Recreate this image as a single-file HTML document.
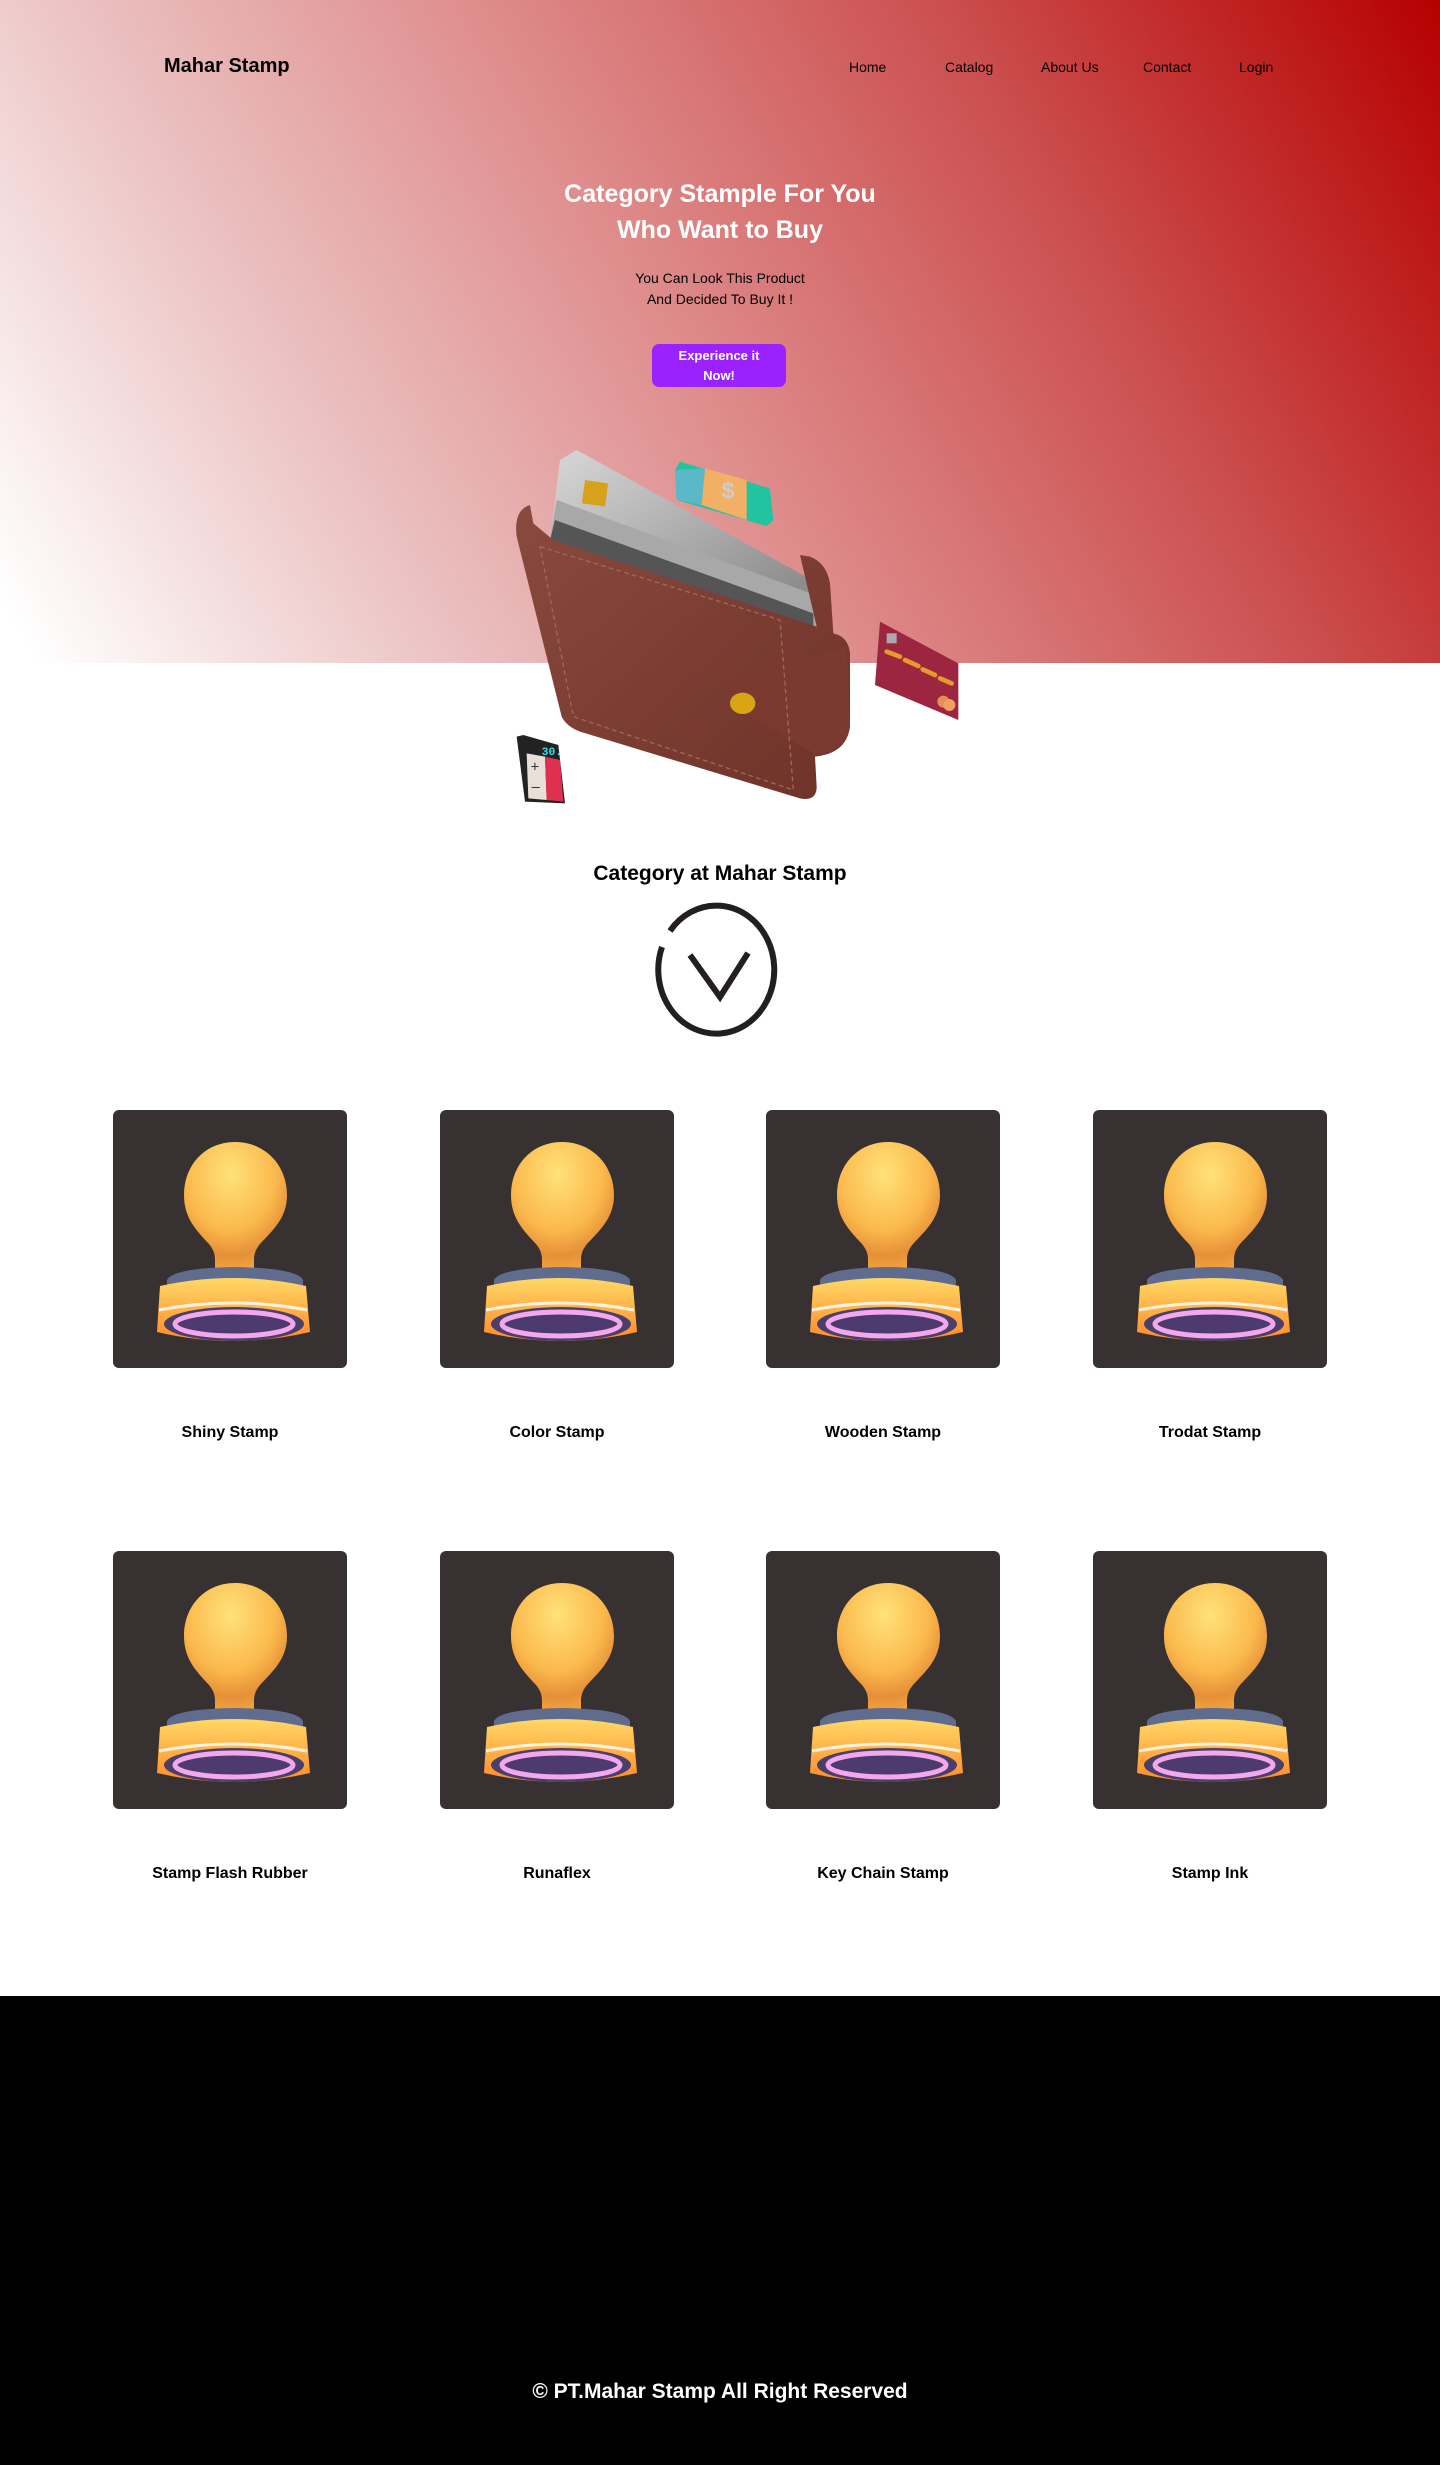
<!DOCTYPE html>
<html><head><meta charset="utf-8">
<style>
*{margin:0;padding:0;box-sizing:border-box}
body{width:1440px;height:2465px;position:relative;background:#fff;font-family:"Liberation Sans",sans-serif;overflow:hidden}
.hero{position:absolute;left:0;top:0;width:1440px;height:663px;background:linear-gradient(60deg,#ffffff 2%,#ecc4c4 24%,#de8a8a 48%,#cc5050 72%,#b60000 100%)}
.abs{position:absolute}
.logo{left:164px;top:55px;font-size:20px;font-weight:bold;color:#000}
.nav{top:59px;font-size:14px;color:#000}
h1{position:absolute;left:0;width:1440px;top:176px;text-align:center;color:#fff;font-size:25px;line-height:36px;font-weight:bold}
.sub{left:0;width:1440px;top:268px;text-align:center;font-size:14px;line-height:21px;color:#000}
.btn{left:652px;top:344px;width:134px;height:43px;background:#9b22ff;border-radius:7px;color:#fff;font-size:13px;font-weight:bold;text-align:center;line-height:20px;padding-top:2px}
.cat{left:0;width:1440px;top:862px;text-align:center;font-size:21px;font-weight:bold}
.card{position:absolute;width:234px;height:258px;background:#383132;border-radius:6px}
.lbl{position:absolute;width:234px;text-align:center;font-size:16px;font-weight:bold;color:#000}
.foot{left:0;top:1996px;width:1440px;height:469px;background:#000}
.ft{left:0;width:1440px;top:2380px;text-align:center;color:#fff;font-size:21px;font-weight:bold}
</style></head><body>
<div class="hero"></div>
<div class="abs logo">Mahar Stamp</div>
<div class="abs nav" style="left:849px">Home</div>
<div class="abs nav" style="left:945px">Catalog</div>
<div class="abs nav" style="left:1041px">About Us</div>
<div class="abs nav" style="left:1143px">Contact</div>
<div class="abs nav" style="left:1239px">Login</div>
<h1>Category Stample For You<br>Who Want to Buy</h1>
<div class="abs sub">You Can Look This Product<br>And Decided To Buy It !</div>
<div class="abs btn">Experience it<br>Now!</div>

<svg class="abs" style="left:500px;top:440px" width="470" height="380" viewBox="0 0 1410 1140">
<defs>
<linearGradient id="lea" x1="0" y1="0" x2="1" y2="1"><stop offset="0" stop-color="#8a4a3e"/><stop offset="1" stop-color="#6e3228"/></linearGradient>
<linearGradient id="met" x1="0" y1="0" x2="1" y2="1"><stop offset="0" stop-color="#d8d8d8"/><stop offset="1" stop-color="#7a7a7a"/></linearGradient>
</defs>
<path d="M230,30 L990,450 L1000,600 L150,300 L180,60 Z" fill="url(#met)"/>
<path d="M170,180 L960,470 L950,560 L150,300 Z" fill="#a8a8a8"/>
<path d="M165,240 L940,520 L940,700 L150,300 Z" fill="#555"/>
<rect x="250" y="125" width="70" height="70" fill="#d6a21a" transform="rotate(8 285 160)"/>
<path d="M90,195 Q40,210 50,290 L185,830 Q200,860 240,875 L900,1075 Q950,1085 950,1040 L945,950 Q1040,940 1050,860 L1050,640 Q1045,590 1000,580 L990,430 Q980,370 930,350 L900,345 L950,560 L160,300 L100,250 Z" fill="url(#lea)"/>
<path d="M670,740 Q680,700 730,710 L1040,620 L1050,860 Q1040,930 950,945 L720,810 Q670,790 670,740 Z" fill="#7a3a30"/>
<ellipse cx="728" cy="790" rx="38" ry="32" fill="#d9a514"/>
<path d="M120,320 L840,540 L880,1050 L220,830 Z" fill="none" stroke="#a0685a" stroke-width="4" stroke-dasharray="14 10"/>
<path d="M525,90 L540,65 L810,145 L820,240 L800,258 L530,180 Z" fill="#22c4a0"/>
<path d="M525,90 L615,85 L605,195 L530,180 Z" fill="#5ab8c8"/>
<path d="M615,85 L740,120 L740,240 L605,195 Z" fill="#f2b066"/>
<text x="665" y="175" font-size="70" fill="#ccc" font-family="Liberation Sans" font-weight="bold">$</text>
<path d="M1140,545 L1375,670 L1375,840 L1125,735 Z" fill="#9c2640"/>
<rect x="1160" y="580" width="30" height="30" fill="#aaa"/>
<path d="M1160,635 L1200,650 M1215,660 L1255,678 M1268,688 L1305,705 M1320,715 L1355,730" stroke="#e59a2a" stroke-width="14" stroke-linecap="round"/>
<circle cx="1330" cy="785" r="18" fill="#e88a5a"/><circle cx="1348" cy="795" r="18" fill="#f0a060"/>
<path d="M50,890 L70,885 L175,915 L195,1090 L75,1085 Z" fill="#222"/>
<path d="M80,940 L135,950 L140,1080 L85,1075 Z" fill="#e8e0d8"/>
<path d="M135,950 L180,960 L190,1085 L140,1080 Z" fill="#e03050"/>
<text x="125" y="945" font-size="34" fill="#2ee0f0" font-family="Liberation Mono" font-weight="bold">30.</text>
<text x="92" y="995" font-size="44" fill="#333" font-family="Liberation Sans">+</text>
<text x="95" y="1055" font-size="44" fill="#333" font-family="Liberation Sans">–</text>
</svg>

<div class="abs cat">Category at Mahar Stamp</div>
<svg class="abs" style="left:650px;top:895px" width="140" height="150" viewBox="0 0 140 150">
<path d="M20,36 A58,64 0 1 1 12,52" fill="none" stroke="#231f20" stroke-width="6"/>
<path d="M40,60 L70,102 L98,58" fill="none" stroke="#231f20" stroke-width="6"/>
</svg>

<svg width="0" height="0" style="position:absolute">
<defs>
<radialGradient id="ball" cx="0.45" cy="0.25" r="0.8"><stop offset="0" stop-color="#ffe27a"/><stop offset="0.55" stop-color="#fbb94c"/><stop offset="0.8" stop-color="#e59038"/><stop offset="1" stop-color="#f6a840"/></radialGradient>
<linearGradient id="band" x1="0" y1="0" x2="0" y2="1"><stop offset="0" stop-color="#ffd866"/><stop offset="1" stop-color="#ff8a2a"/></linearGradient>
<symbol id="stamp" viewBox="0 0 234 258">
<path d="M122,32 C92,32 71,55 71,85 C71,108 83,120 96,134 C101,140 102,145 102,150 L102,160 L141,160 L141,150 C141,145 142,140 147,134 C160,120 174,108 174,85 C174,55 152,32 122,32 Z" fill="url(#ball)"/>
<path d="M54,170 Q60,158 122,157 Q184,158 190,170 L190,176 L54,176 Z" fill="#606c8e"/>
<path d="M47,176 Q120,160 193,176 L197,222 Q120,240 44,222 Z" fill="url(#band)"/>
<path d="M46,200 Q120,186 194,200" stroke="#fff2e0" stroke-width="3" fill="none"/>
<ellipse cx="121" cy="214" rx="70" ry="17" fill="#4c3e6a"/>
<ellipse cx="121" cy="214" rx="59" ry="12" fill="#4d3a6e" stroke="#f4a8ec" stroke-width="5"/>
</symbol>
</defs>
</svg>

<div class="card" style="left:113px;top:1110px"><svg width="234" height="258"><use href="#stamp"/></svg></div>
<div class="card" style="left:440px;top:1110px"><svg width="234" height="258"><use href="#stamp"/></svg></div>
<div class="card" style="left:766px;top:1110px"><svg width="234" height="258"><use href="#stamp"/></svg></div>
<div class="card" style="left:1093px;top:1110px"><svg width="234" height="258"><use href="#stamp"/></svg></div>
<div class="lbl" style="left:113px;top:1424px">Shiny Stamp</div>
<div class="lbl" style="left:440px;top:1424px">Color Stamp</div>
<div class="lbl" style="left:766px;top:1424px">Wooden Stamp</div>
<div class="lbl" style="left:1093px;top:1424px">Trodat Stamp</div>

<div class="card" style="left:113px;top:1551px"><svg width="234" height="258"><use href="#stamp"/></svg></div>
<div class="card" style="left:440px;top:1551px"><svg width="234" height="258"><use href="#stamp"/></svg></div>
<div class="card" style="left:766px;top:1551px"><svg width="234" height="258"><use href="#stamp"/></svg></div>
<div class="card" style="left:1093px;top:1551px"><svg width="234" height="258"><use href="#stamp"/></svg></div>
<div class="lbl" style="left:113px;top:1865px">Stamp Flash Rubber</div>
<div class="lbl" style="left:440px;top:1865px">Runaflex</div>
<div class="lbl" style="left:766px;top:1865px">Key Chain Stamp</div>
<div class="lbl" style="left:1093px;top:1865px">Stamp Ink</div>

<div class="abs foot"></div>
<div class="abs ft">© PT.Mahar Stamp All Right Reserved</div>
</body></html>
